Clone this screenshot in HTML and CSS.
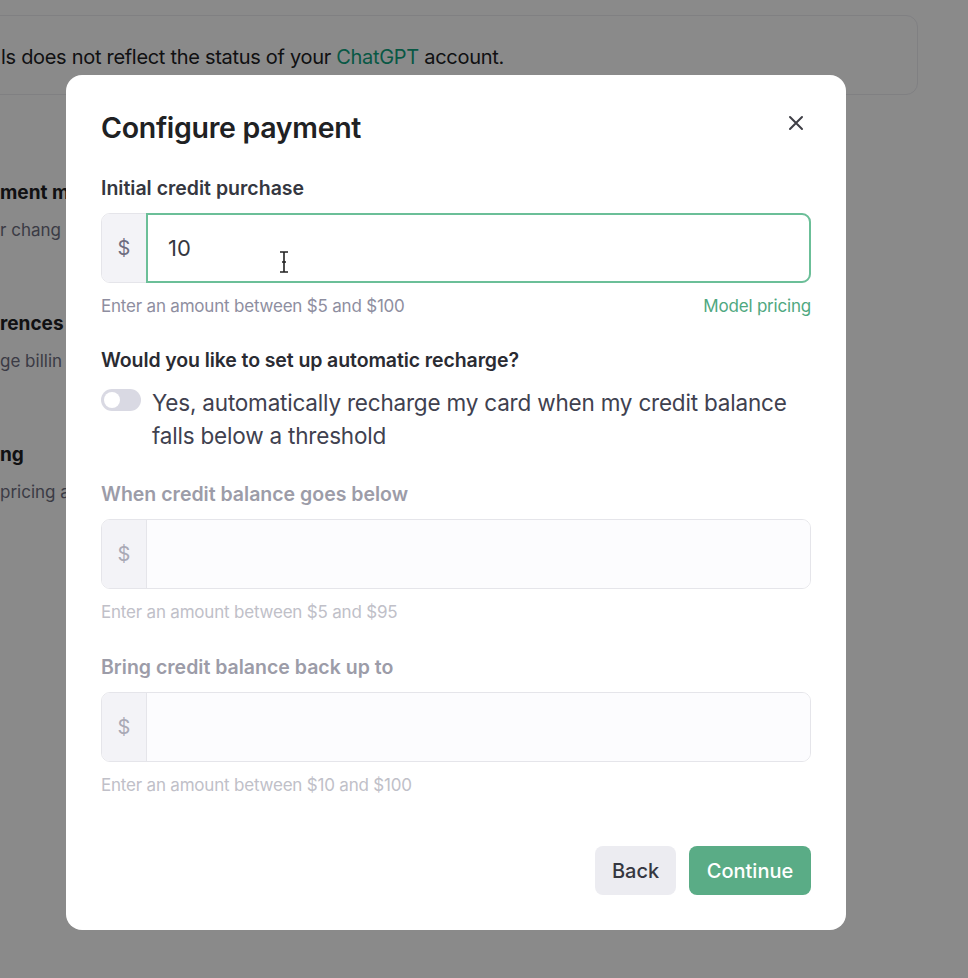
FILE: index.html
```html
<!DOCTYPE html>
<html lang="en">
<head>
    <meta charset="UTF-8" />
    <meta name="viewport" content="width=device-width, initial-scale=1.0" />
    <title>Configure payment</title>
    <link rel="stylesheet" href="styles.css">
</head>
<body>
    <div class="page">
        <div class="notice">ls does not reflect the status of your <span class="link">ChatGPT</span> account.</div>

        <div class="section">
            <div class="section-title">ment m</div>
            <div class="section-text">r chang</div>
        </div>
        <div class="section">
            <div class="section-title">rences</div>
            <div class="section-text">ge billin</div>
        </div>
        <div class="section">
            <div class="section-title">ng</div>
            <div class="section-text">pricing a</div>
        </div>
    </div>

    <div class="overlay"></div>

    <div class="modal">
        <div class="modal-header">
            <h2>Configure payment</h2>
            <button class="close-btn" aria-label="Close">
                <svg width="16" height="16" viewBox="0 0 16 16"><path d="M2 2L14 14M14 2L2 14" stroke="#3f3f46" stroke-width="2" stroke-linecap="round"/></svg>
            </button>
        </div>

        <div class="field">
            <label class="label">Initial credit purchase</label>
            <div class="input-group focused">
                <span class="prefix">$</span>
                <div class="input">10</div>
                <svg class="ibeam" width="12" height="24" viewBox="0 0 12 24"><path d="M2 2h3.5c.5 0 .5.5.5 1v18c0 .5 0 1-.5 1H2M10 2H6.5C6 2 6 2.5 6 3v18c0 .5 0 1 .5 1H10M4 12h4" stroke="#222" stroke-width="1.6" fill="none"/></svg>
            </div>
            <div class="hint-row">
                <span class="hint">Enter an amount between $5 and $100</span>
                <span class="pricing-link">Model pricing</span>
            </div>
        </div>

        <div class="question">Would you like to set up automatic recharge?</div>
        <div class="toggle-row">
            <span class="toggle"><span class="knob"></span></span>
            <span class="toggle-text">Yes, automatically recharge my card when my credit balance falls below a threshold</span>
        </div>

        <div class="field disabled">
            <label class="label">When credit balance goes below</label>
            <div class="input-group">
                <span class="prefix">$</span>
                <div class="input"></div>
            </div>
            <div class="hint-row">
                <span class="hint">Enter an amount between $5 and $95</span>
            </div>
        </div>

        <div class="field disabled">
            <label class="label">Bring credit balance back up to</label>
            <div class="input-group">
                <span class="prefix">$</span>
                <div class="input"></div>
            </div>
            <div class="hint-row">
                <span class="hint">Enter an amount between $10 and $100</span>
            </div>
        </div>

        <div class="actions">
            <button class="btn btn-back">Back</button>
            <button class="btn btn-continue">Continue</button>
        </div>
    </div>
</body>
</html>
```

FILE: styles.css
```css
body {
    margin: 0;
    font-family: Inter, "Noto Sans", Arial, sans-serif;
    background-color: #fff;
    color: #202123;
    height: 978px;
    overflow: hidden;
}

.page {
    padding-top: 15px;
}

.notice {
    margin-left: -30px;
    width: 948px;
    height: 80px;
    box-sizing: border-box;
    border: 1px solid #ececf1;
    border-radius: 12px;
    padding-left: 30px;
    font-size: 20px;
    line-height: 82px;
    letter-spacing: -0.3px;
    color: #202123;
    white-space: nowrap;
}

.link {
    color: #10a37f;
}

.section {
    width: 66px;
    overflow: hidden;
    white-space: nowrap;
    margin-top: 86px;
}

.section + .section {
    margin-top: 70px;
}

.section-title {
    font-size: 19px;
    font-weight: 700;
    line-height: 24px;
}

.section-text {
    margin-top: 13px;
    font-size: 17px;
    line-height: 24px;
    color: #6e6e80;
}

.overlay {
    position: fixed;
    inset: 0;
    background: rgba(0, 0, 0, 0.46);
}

.modal {
    position: absolute;
    left: 66px;
    top: 75px;
    width: 780px;
    height: 855px;
    box-sizing: border-box;
    background: #fff;
    border-radius: 16px;
    padding: 37px 35px 35px;
    display: flex;
    flex-direction: column;
}

.modal-header {
    display: flex;
    justify-content: space-between;
    align-items: center;
}

.modal-header h2 {
    margin: 0;
    font-size: 28.5px;
    line-height: 32px;
    font-weight: 600;
    color: #202123;
    letter-spacing: -0.3px;
}

.close-btn {
    background: none;
    border: none;
    padding: 0;
    margin-right: 7px;
    margin-top: -10px;
    cursor: pointer;
    display: flex;
}

.field {
    display: flex;
    flex-direction: column;
}

.modal-header + .field {
    margin-top: 34px;
}

.label {
    font-size: 19.5px;
    line-height: 20px;
    font-weight: 600;
    color: #353740;
    letter-spacing: 0;
}

.input-group {
    position: relative;
    margin-top: 15px;
    display: flex;
    height: 68px;
    border: 1px solid #e5e5ea;
    border-radius: 9px;
    overflow: hidden;
}

.input-group.focused {
    height: 70px;
    box-sizing: border-box;
    overflow: visible;
}

.prefix {
    width: 44px;
    display: flex;
    align-items: center;
    justify-content: center;
    background: #f3f3f7;
    border-right: 1px solid #e5e5ea;
    font-size: 20px;
    color: #6e6e80;
}

.focused .prefix {
    border-radius: 8px 0 0 8px;
    border-right: none;
}

.input {
    flex: 1;
    display: flex;
    align-items: center;
    padding-left: 20px;
    font-size: 22px;
    color: #353740;
    background: #fcfcfe;
}

.focused .input {
    background: #fff;
    border: 2px solid #6bbf98;
    border-radius: 0 9px 9px 0;
    margin: -1px -1px -1px 0;
}

.ibeam {
    position: absolute;
    left: 176px;
    top: 36px;
}

.hint-row {
    margin-top: 14px;
    display: flex;
    justify-content: space-between;
    font-size: 17px;
    line-height: 18px;
    letter-spacing: -0.2px;
}

.hint {
    color: #8e8ea0;
}

.pricing-link {
    color: #4fa880;
}

.question {
    margin-top: 35px;
    font-size: 19.5px;
    line-height: 20px;
    font-weight: 600;
    color: #2a2b32;
    letter-spacing: -0.1px;
}

.toggle-row {
    margin-top: 16px;
    display: flex;
    gap: 11px;
}

.toggle {
    flex: none;
    width: 40px;
    height: 22px;
    margin-top: 3px;
    border-radius: 11px;
    background: #d9d9e3;
    position: relative;
}

.knob {
    position: absolute;
    left: 3px;
    top: 3px;
    width: 16px;
    height: 16px;
    border-radius: 50%;
    background: #fff;
}

.toggle-text {
    font-size: 22.5px;
    line-height: 33px;
    color: #40414f;
    letter-spacing: -0.2px;
    padding-right: 20px;
}

.toggle-row + .field {
    margin-top: 32px;
}

.field + .field {
    margin-top: 36px;
}

.disabled .label {
    color: #9c9ca8;
}

.disabled .hint {
    color: #c0c0c8;
}

.disabled .prefix {
    color: #a9a9b5;
}

.actions {
    margin-top: auto;
    display: flex;
    justify-content: flex-end;
    gap: 13px;
}

.btn {
    height: 49px;
    border: none;
    border-radius: 8px;
    font-family: inherit;
    font-size: 20px;
    font-weight: 500;
    padding: 0;
    cursor: pointer;
}

.btn-back {
    background: #ececf1;
    color: #353740;
    width: 81px;
}

.btn-continue {
    background: #5aac86;
    color: #fff;
    width: 122px;
}
```
